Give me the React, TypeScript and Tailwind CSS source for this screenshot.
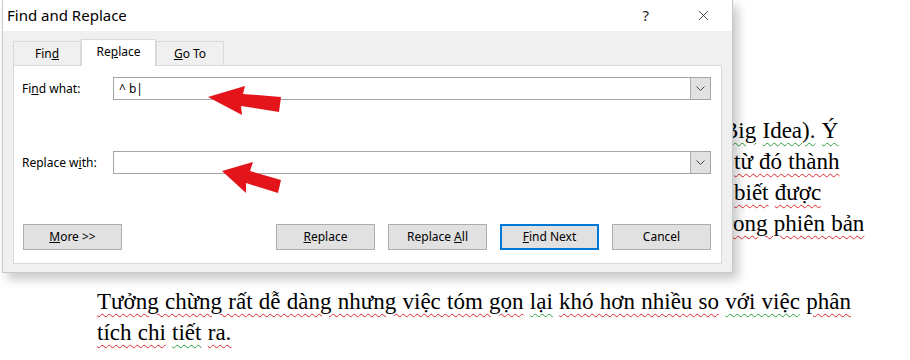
import { X } from 'lucide-react';

const ui = { fontFamily: '"Noto Sans", "Open Sans", sans-serif' };
const serif = { fontFamily: '"Liberation Serif", "Times New Roman", serif' };

function Sq({ children, green }: { children: React.ReactNode; green?: boolean }) {
  return (
    <span
      className={`underline decoration-wavy decoration-1 underline-offset-[4px] ${
        green ? 'decoration-[#2e9e3e]' : 'decoration-[#e0262b]'
      }`}
    >
      {children}
    </span>
  );
}

function Btn({ children, primary, className = '' }: { children: React.ReactNode; primary?: boolean; className?: string }) {
  return (
    <button
      type="button"
      className={`h-[26px] w-[99px] bg-[#e1e1e1] text-[12px] text-black ${
        primary ? 'border-2 border-[#0078d7]' : 'border border-[#adadad]'
      } ${className}`}
    >
      {children}
    </button>
  );
}

function Combo() {
  return (
    <div className="flex h-[23px] flex-1 border border-[#a5a5a5] bg-white">
      <div className="flex-1" />
      <div className="flex w-[20px] items-center justify-center border-l border-[#adadad] bg-[#e1e1e1]">
        <svg width="9" height="6" viewBox="0 0 9 6" fill="none">
          <polyline points="0.5,0.5 4.5,4.5 8.5,0.5" stroke="#444" strokeWidth="1" />
        </svg>
      </div>
    </div>
  );
}

function Dialog() {
  return (
    <div
      className="absolute left-[2px] top-0 flex h-[273px] w-[731px] flex-col border-x border-b border-[#c9c9c9] bg-[#f0f0f0] shadow-[5px_6px_10px_rgba(0,0,0,0.22)]"
      style={ui}
    >
      <div className="flex h-[31px] items-center bg-white pl-[4px] pr-[20px]">
        <span className="flex-1 text-[15px] text-black">Find and Replace</span>
        <span className="mr-[46px] text-[15px] text-[#222]">?</span>
        <X size={17} strokeWidth={1.1} className="text-[#222]" />
      </div>
      <div className="flex flex-1 flex-col px-[10px] pb-[8px] pt-[8px]">
        <div className="flex h-[26px] items-end text-[12px] text-black">
          <div className="flex h-[24px] w-[68px] items-center justify-center border border-b-0 border-[#d9d9d9] bg-[#f0f0f0]">
            Fin<span className="underline">d</span>
          </div>
          <div className="relative z-10 -mb-px flex h-[27px] w-[75px] items-center justify-center border border-b-0 border-[#d9d9d9] bg-white pb-[2px]">
            Re<span className="underline">p</span>lace
          </div>
          <div className="flex h-[24px] w-[68px] items-center justify-center border border-b-0 border-[#d9d9d9] bg-[#f0f0f0]">
            <span className="underline">G</span>o To
          </div>
        </div>
        <div className="flex flex-1 flex-col border border-[#d9d9d9] bg-white pl-[8px] pr-[10px] pt-[11px] text-[12px] text-black">
          <div className="flex items-center">
            <span className="w-[91px]">
              Fi<span className="underline">n</span>d what:
            </span>
            <div className="relative flex flex-1">
              <Combo />
              <span className="absolute left-[6px] top-[3px] text-[12px]">^ b|</span>
            </div>
          </div>
          <div className="mt-[51px] flex items-center">
            <span className="w-[91px]">
              Replace w<span className="underline">i</span>th:
            </span>
            <Combo />
          </div>
          <div className="mt-[50px] flex gap-[13px]">
            <Btn className="ml-px">
              <span className="underline">M</span>ore &gt;&gt;
            </Btn>
            <div className="flex-1" />
            <Btn>
              <span className="underline">R</span>eplace
            </Btn>
            <Btn>
              Replace <span className="underline">A</span>ll
            </Btn>
            <Btn primary>
              <span className="underline">F</span>ind Next
            </Btn>
            <Btn>Cancel</Btn>
          </div>
        </div>
      </div>
    </div>
  );
}

function Arrows() {
  return (
    <svg className="pointer-events-none absolute left-0 top-0" width="910" height="360">
      <polygon
        points="208,97 245,86 243,94 281,97 279,112 241,106 242,115"
        fill="#e3151b"
      />
      <polygon
        points="222,171 253,162 250,171 281,180 278,193 246,183 246,193"
        fill="#e3151b"
      />
    </svg>
  );
}

export default function App() {
  return (
    <div className="relative h-[360px] w-[910px] overflow-hidden bg-white">
      <div className="pt-[115px] text-[23px] leading-[31px] text-black [word-spacing:0.5px]" style={serif}>
        <div className="pl-[723px]">
          <Sq green>Big</Sq> <Sq green>Idea).</Sq> <Sq green>Ý</Sq>
        </div>
        <div className="pl-[734px]">
          <Sq>từ đó thành</Sq>
        </div>
        <div className="pl-[734px]">
          <Sq>biết</Sq> <Sq>được</Sq>
        </div>
        <div className="pl-[719px]">
          <Sq>trong phiên bản</Sq>
        </div>
        <div className="mt-[47px] pl-[97px]">
          <Sq>Tưởng chừng rất dễ dàng nhưng việc tóm gọn</Sq> <Sq green>lại</Sq>{' '}
          <Sq>khó hơn nhiều so</Sq> <Sq green>với việc</Sq> <Sq>phân</Sq>
        </div>
        <div className="pl-[97px]">
          <Sq>tích chi</Sq> <Sq green>tiết</Sq> <Sq>ra.</Sq>
        </div>
      </div>
      <Dialog />
      <Arrows />
    </div>
  );
}
